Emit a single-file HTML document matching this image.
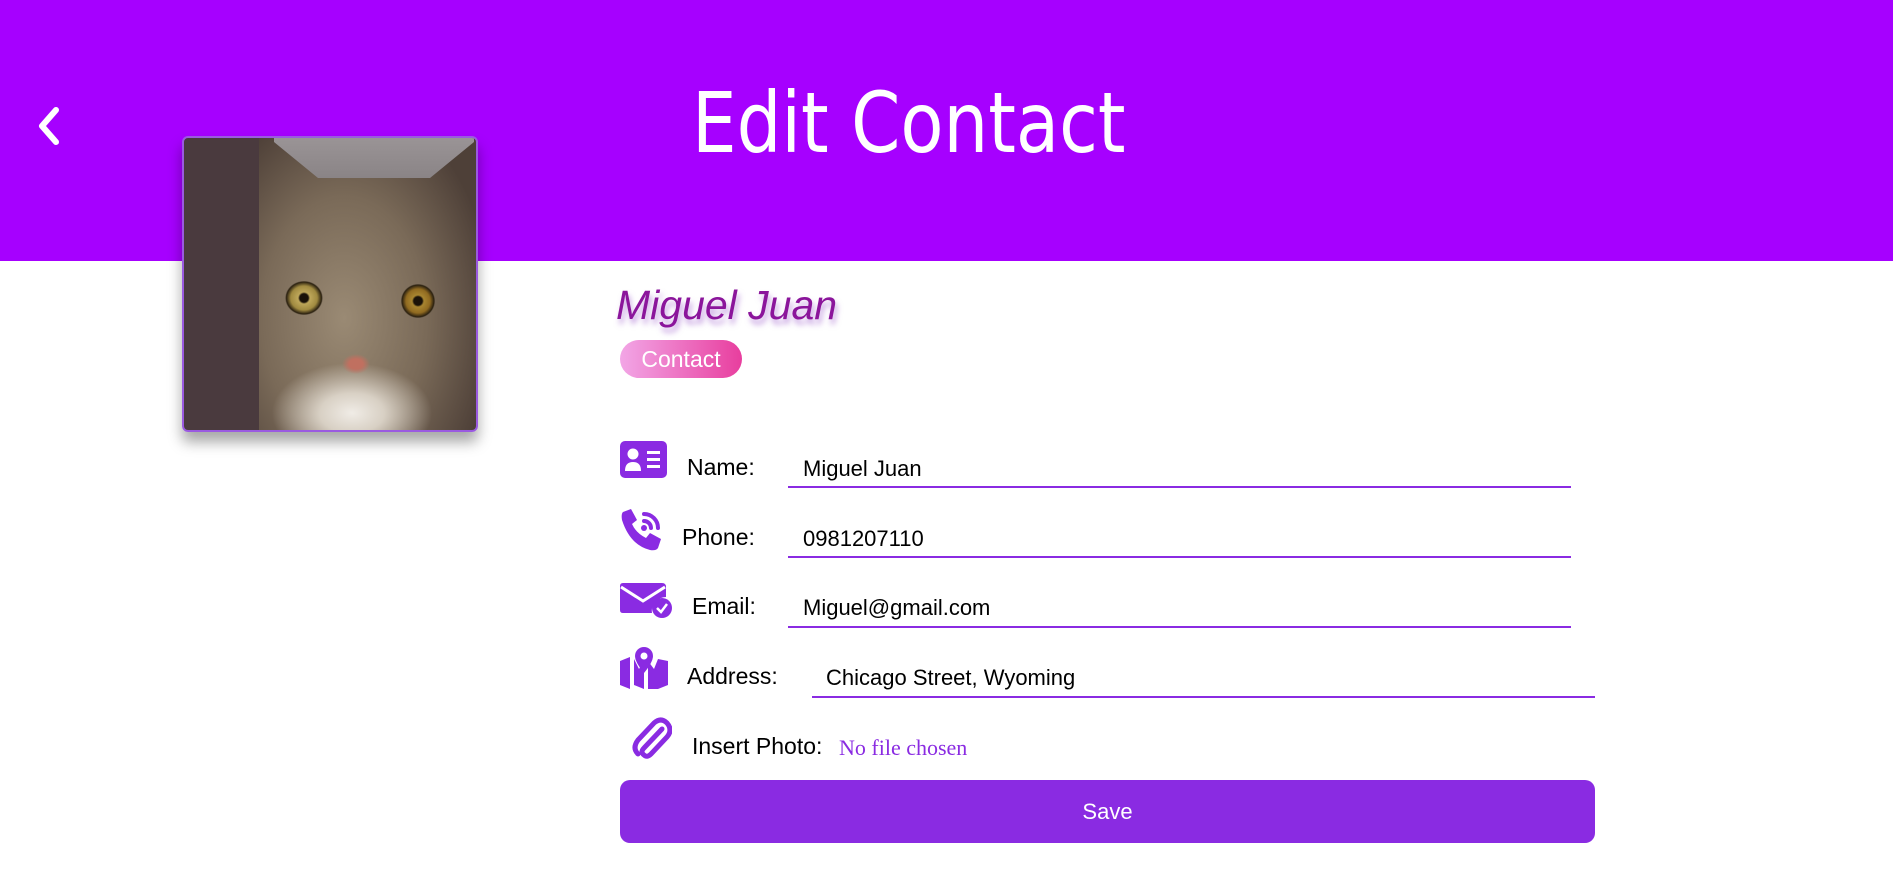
<!DOCTYPE html>
<html><head><meta charset="utf-8"><style>
*{margin:0;padding:0;box-sizing:border-box}
body{width:1893px;height:881px;background:#fff;position:relative;overflow:hidden;font-family:"Liberation Sans",sans-serif}
.hdr{position:absolute;left:0;top:0;width:1893px;height:261px;background:#a600ff}
.title{position:absolute;left:692px;top:74px;font-size:84px;color:#fff;white-space:nowrap;transform:scaleX(0.84);transform-origin:left top;font-family:"DejaVu Sans","Liberation Sans",sans-serif}
.photo{position:absolute;left:182px;top:136px;width:296px;height:296px;border:2px solid #9a5ae0;border-radius:6px;overflow:hidden;box-shadow:0 10px 14px rgba(0,0,0,.35);
background:
radial-gradient(circle 6px at 120px 160px,#1a1208 0,#1a1208 70%,transparent 100%),
radial-gradient(circle 6px at 234px 163px,#1a1208 0,#1a1208 70%,transparent 100%),
radial-gradient(ellipse 22px 20px at 120px 160px,#d8c070 0,#a08a40 60%,#2a2010 80%,transparent 86%),
radial-gradient(ellipse 20px 20px at 234px 163px,#c0a040 0,#906a20 60%,#2a2010 80%,transparent 86%),
radial-gradient(ellipse 14px 10px at 172px 226px,#c07060 0,#c07060 50%,transparent 100%),
radial-gradient(ellipse 80px 50px at 168px 275px,#f0ece6 0,#d8d0c4 40%,transparent 100%),
linear-gradient(90deg,#4a3a3e 0,#4a3a3e 75px,transparent 75px),
radial-gradient(ellipse 150px 220px at 160px 180px,#9a8a74 0,#7a6a58 55%,#4e4038 100%);}
.photo .sky{position:absolute;left:90px;top:0;width:200px;height:40px;background:linear-gradient(#9a9496,#8a8486);clip-path:polygon(0 0,100% 0,100% 10%,78% 100%,22% 100%,0 10%)}
.name{position:absolute;left:616px;top:282px;font-size:41px;font-style:italic;color:#8b159b;text-shadow:2px 5px 6px rgba(150,80,200,.55)}
.pill{position:absolute;left:620px;top:340px;width:122px;height:38px;border-radius:19px;background:linear-gradient(90deg,#f2a6e6,#e83e9e);color:#fff;font-size:23px;text-align:center;line-height:38px}
.lbl{position:absolute;font-size:23px;color:#000;white-space:nowrap}
.val{position:absolute;font-size:22px;color:#000;white-space:nowrap}
.line{position:absolute;height:2px;background:#8a2be2}
.ico{position:absolute}
.save{position:absolute;left:620px;top:780px;width:975px;height:63px;background:#8a2be2;border-radius:10px;color:#fff;font-size:22px;text-align:center;line-height:63px}
</style></head><body>
<div class="hdr"></div>
<svg class="ico" style="left:34px;top:104px" width="30" height="44" viewBox="0 0 30 44"><path d="M22 6 L8 22 L22 38" fill="none" stroke="#fff" stroke-width="6" stroke-linecap="round" stroke-linejoin="round"/></svg>
<div class="title">Edit Contact</div>
<div class="photo"><div class="sky"></div></div>
<div class="name">Miguel Juan</div>
<div class="pill">Contact</div>

<svg class="ico" style="left:620px;top:441px" width="48" height="37" viewBox="0 0 48 37"><rect x="0" y="0" width="47" height="37" rx="5" fill="#8a2be2"/><circle cx="13" cy="13" r="5.5" fill="#fff"/><path d="M5 30 q0-9 8-9 q8 0 8 9z" fill="#fff"/><rect x="27" y="10" width="13" height="3" fill="#fff"/><rect x="27" y="17" width="13" height="3" fill="#fff"/><rect x="27" y="24" width="13" height="3" fill="#fff"/></svg>
<div class="lbl" style="left:687px;top:454px">Name:</div>
<div class="val" style="left:803px;top:456px">Miguel Juan</div>
<div class="line" style="left:788px;top:486px;width:783px"></div>

<svg class="ico" style="left:620px;top:508px" width="44" height="43" viewBox="0 0 44 43"><path d="M3 4 L11 1 L17 12 L12 16 Q16 25 26 30 L30 25 L41 31 L38 40 Q36 43 30 42 Q10 37 2 12 Q1 6 3 4Z" fill="#8a2be2"/><path d="M24 6 A14 14 0 0 1 38 20" fill="none" stroke="#8a2be2" stroke-width="4" stroke-linecap="round"/><path d="M24 13 A7 7 0 0 1 31 20" fill="none" stroke="#8a2be2" stroke-width="4" stroke-linecap="round"/><circle cx="24" cy="20" r="3" fill="#8a2be2"/></svg>
<div class="lbl" style="left:682px;top:524px">Phone:</div>
<div class="val" style="left:803px;top:526px">0981207110</div>
<div class="line" style="left:788px;top:556px;width:783px"></div>

<svg class="ico" style="left:620px;top:583px" width="53" height="36" viewBox="0 0 53 36"><path d="M3 0 H42 Q46 0 46 4 V14 Q40 14 35 19 Q31 24 32 30 H3 Q0 30 0 27 V3 Q0 0 3 0Z" fill="#8a2be2"/><path d="M1 4 L23 18 L45 4" fill="none" stroke="#fff" stroke-width="3"/><circle cx="42" cy="25" r="10" fill="#8a2be2"/><path d="M37 25 L41 29 L47 21" fill="none" stroke="#fff" stroke-width="2.5"/></svg>
<div class="lbl" style="left:692px;top:593px">Email:</div>
<div class="val" style="left:803px;top:595px">Miguel@gmail.com</div>
<div class="line" style="left:788px;top:626px;width:783px"></div>

<svg class="ico" style="left:620px;top:647px" width="48" height="42" viewBox="0 0 48 42"><path d="M0 14 L10 10 V42 L0 38Z M14 12 L19 22 L24 14 L24 42 L14 38Z M28 14 L34 22 L38 12 L48 14 V38 L38 42 L28 42Z" fill="#8a2be2"/><path d="M24 0 A9 9 0 0 1 33 9 Q33 15 24 26 Q15 15 15 9 A9 9 0 0 1 24 0Z" fill="#8a2be2"/><circle cx="24" cy="9" r="3.5" fill="#fff"/></svg>
<div class="lbl" style="left:687px;top:663px">Address:</div>
<div class="val" style="left:826px;top:665px">Chicago Street, Wyoming</div>
<div class="line" style="left:812px;top:696px;width:783px"></div>

<svg class="ico" style="left:632px;top:717px" width="40" height="43" viewBox="0 0 40 43"><path d="M30 12 L12 31 Q8 35 12 38 Q15 41 19 37 L35 20 Q41 13 35 6 Q29 0 22 6 L6 23 Q0 31 6 37" fill="none" stroke="#8a2be2" stroke-width="5" stroke-linecap="round"/></svg>
<div class="lbl" style="left:692px;top:733px">Insert Photo:</div>
<div class="val" style="left:839px;top:735px;font-family:'Liberation Serif',serif;color:#8a2be2">No file chosen</div>

<div class="save">Save</div>
</body></html>
